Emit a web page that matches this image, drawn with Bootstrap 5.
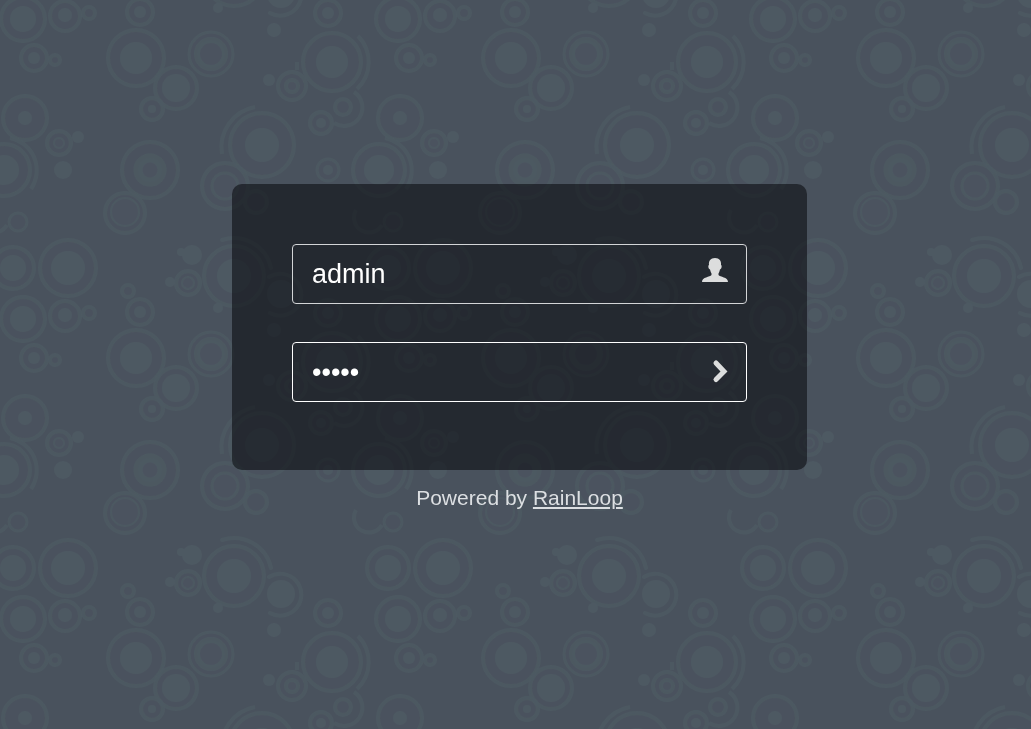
<!DOCTYPE html>
<html lang="en">
<head>
<meta charset="utf-8">
<meta name="viewport" content="width=device-width, initial-scale=1">
<title>RainLoop</title>
<link href="https://cdn.jsdelivr.net/npm/bootstrap@5.3.0/dist/css/bootstrap.min.css" rel="stylesheet">
<style>
  body { background: #49525d; font-family: "Liberation Sans", Arial, sans-serif; }
  .backdrop { z-index: -1; }
  #rings circle { fill: #4d5962; fill-opacity: .15; }
  .login-page { padding: 0 0 0 8px; }
  .login-wrap { width: 100%; max-width: 575px; padding-bottom: 31px; }
  .login-panel { background: rgba(0, 0, 3, .5); border-radius: 10px; padding: 60px 60px 68px; gap: 38px; }
  .login-field { position: relative; }
  .login-field .form-control {
    height: 60px; padding: 0 60px 0 19px; border: 1px solid #d3d5d7; border-radius: 4px;
    background: transparent; color: #fff; font-size: 27px; line-height: 40px; box-shadow: none;
  }
  .login-field .form-control.is-current { border-color: #fff; }
  .login-field .adorn { position: absolute; top: 0; right: 0; width: 57px; height: 60px; padding: 0; border: 0; background: none; color: #dcdddd; }
  .adorn svg { display: block; }
  .powered { margin-top: 12px; font-size: 21px; line-height: 32px; color: #dcdfe2; }
  .powered a { color: inherit; }
</style>
</head>
<body>
<svg class="backdrop position-fixed top-0 start-0 w-100 h-100" aria-hidden="true">
  <defs>
    <g id="rings" fill="none" stroke="#4d5962" stroke-opacity=".85" stroke-width="4">
      <circle cx="23" cy="19" r="22"/><circle cx="65" cy="16" r="15"/><circle cx="89" cy="13" r="6"/>
      <circle cx="140" cy="12" r="13"/><circle cx="128" cy="291" r="6"/>
      <circle cx="34" cy="58" r="13"/><circle cx="55" cy="60" r="5"/>
      <circle cx="136" cy="58" r="28"/><circle cx="176" cy="88" r="21"/>
      <circle cx="211" cy="54" r="22" stroke-width="3"/><circle cx="211" cy="54" r="14" stroke-width="6"/>
      <circle cx="152" cy="109" r="11"/><circle cx="25" cy="118" r="22"/>
      <circle cx="59" cy="143" r="12"/><circle cx="59" cy="143" r="5" stroke-width="2"/>
      <circle cx="4" cy="170" r="26"/><path d="M10 138A33 33 0 0 1 31 189"/>
      <circle cx="150" cy="170" r="28"/><circle cx="150" cy="170" r="12" stroke-width="9"/>
      <circle cx="262" cy="145" r="32"/><path d="M222 154A41 41 0 0 1 255 107"/>
      <circle cx="225" cy="186" r="23"/><circle cx="225" cy="186" r="13" stroke-width="3"/>
      <circle cx="256" cy="202" r="11"/>
      <circle cx="125" cy="213" r="20"/><circle cx="125" cy="212" r="14" stroke-width="2"/>
      <circle cx="234" cy="276" r="30"/><path d="M222 240A38 38 0 0 1 271 268" stroke-linecap="round"/>
      <path d="M269 277A21 21 0 1 1 270 313" stroke-linecap="round"/>
      <circle cx="332" cy="62" r="29"/><path d="M358 36A37 37 0 0 1 357 89"/><path d="M297 62v8"/>
      <circle cx="328" cy="13" r="13"/><circle cx="292" cy="86" r="14"/><circle cx="292" cy="86" r="6"/>
      <path d="M354 92A18 18 0 0 1 334 123"/><circle cx="343" cy="107" r="8"/><circle cx="321" cy="123" r="11"/>
      <circle cx="188" cy="283" r="12"/><circle cx="188" cy="283" r="6" stroke-width="2"/>
      <circle cx="13" cy="268" r="21"/><circle cx="68" cy="268" r="28"/>
      <circle cx="328" cy="170" r="11" stroke-width="3"/>
      <path d="M382 225A14 14 0 1 1 356 210"/><circle cx="18" cy="222" r="9" stroke-width="3"/>
    </g>
    <g id="discs" fill="#4d5962">
      <circle cx="23" cy="19" r="13"/><circle cx="65" cy="15" r="7"/><circle cx="140" cy="12" r="6"/>
      <circle cx="34" cy="58" r="6"/><circle cx="136" cy="58" r="16"/><circle cx="176" cy="88" r="14"/>
      <circle cx="152" cy="109" r="4"/><circle cx="25" cy="118" r="7"/><circle cx="78" cy="137" r="6"/>
      <circle cx="4" cy="170" r="15"/><circle cx="63" cy="170" r="9"/>
      <circle cx="262" cy="145" r="17"/><circle cx="234" cy="276" r="17"/><circle cx="281" cy="294" r="14"/>
      <circle cx="218" cy="308" r="5"/><circle cx="274" cy="30" r="7"/><circle cx="332" cy="62" r="16"/>
      <circle cx="328" cy="13" r="6"/><circle cx="269" cy="80" r="6"/><circle cx="321" cy="123" r="5"/>
      <circle cx="192" cy="255" r="10"/><circle cx="181" cy="252" r="4"/><circle cx="170" cy="282" r="5"/>
      <circle cx="13" cy="268" r="13"/><circle cx="68" cy="268" r="17"/><circle cx="328" cy="170" r="5"/>
    </g>
    <g id="motif"><use href="#rings"/><use href="#discs"/></g>
    <pattern id="tile" width="375" height="300" patternUnits="userSpaceOnUse">
      <use href="#motif"/><use href="#motif" x="-375"/><use href="#motif" x="375"/>
      <use href="#motif" y="-300"/><use href="#motif" y="300"/>
    </pattern>
  </defs>
  <rect width="100%" height="100%" fill="url(#tile)"/>
</svg>

<main class="login-page min-vh-100 d-flex justify-content-center align-items-center">
  <div class="login-wrap">
    <form class="login-panel d-flex flex-column" onsubmit="return false">
      <div class="login-field">
        <input class="form-control" id="login" type="text" value="admin" aria-label="Login" autocomplete="username">
        <label class="adorn" for="login">
          <svg width="57" height="60" viewBox="0 -1 57 60" fill="currentColor" aria-hidden="true"><path d="M25 13C20.500 13 18.500 16 19 20C18 20 18 23.500 20 24.500C20.500 26.500 21 27.500 21.500 28.500V30C20 32 12 32 12 37H38C38 32 30 32 28.500 30V28.500C29 27.500 29.500 26.500 30 24.500C32 23.500 32 20 31 20C31.500 16 29.500 13 25 13Z"/></svg>
        </label>
      </div>
      <div class="login-field">
        <input class="form-control is-current" id="password" type="password" value="admin" aria-label="Password" autocomplete="current-password">
        <button class="adorn" type="submit" aria-label="Sign in">
          <svg width="57" height="60" viewBox="0 0 57 60" fill="none" stroke="currentColor" stroke-width="5" stroke-linecap="round"><path d="M26 21L34 29.500L26 37.500"/></svg>
        </button>
      </div>
    </form>
    <div class="powered text-center">Powered by <a href="#">RainLoop</a></div>
  </div>
</main>
<script src="https://cdn.jsdelivr.net/npm/bootstrap@5.3.0/dist/js/bootstrap.bundle.min.js"></script>
</body>
</html>
